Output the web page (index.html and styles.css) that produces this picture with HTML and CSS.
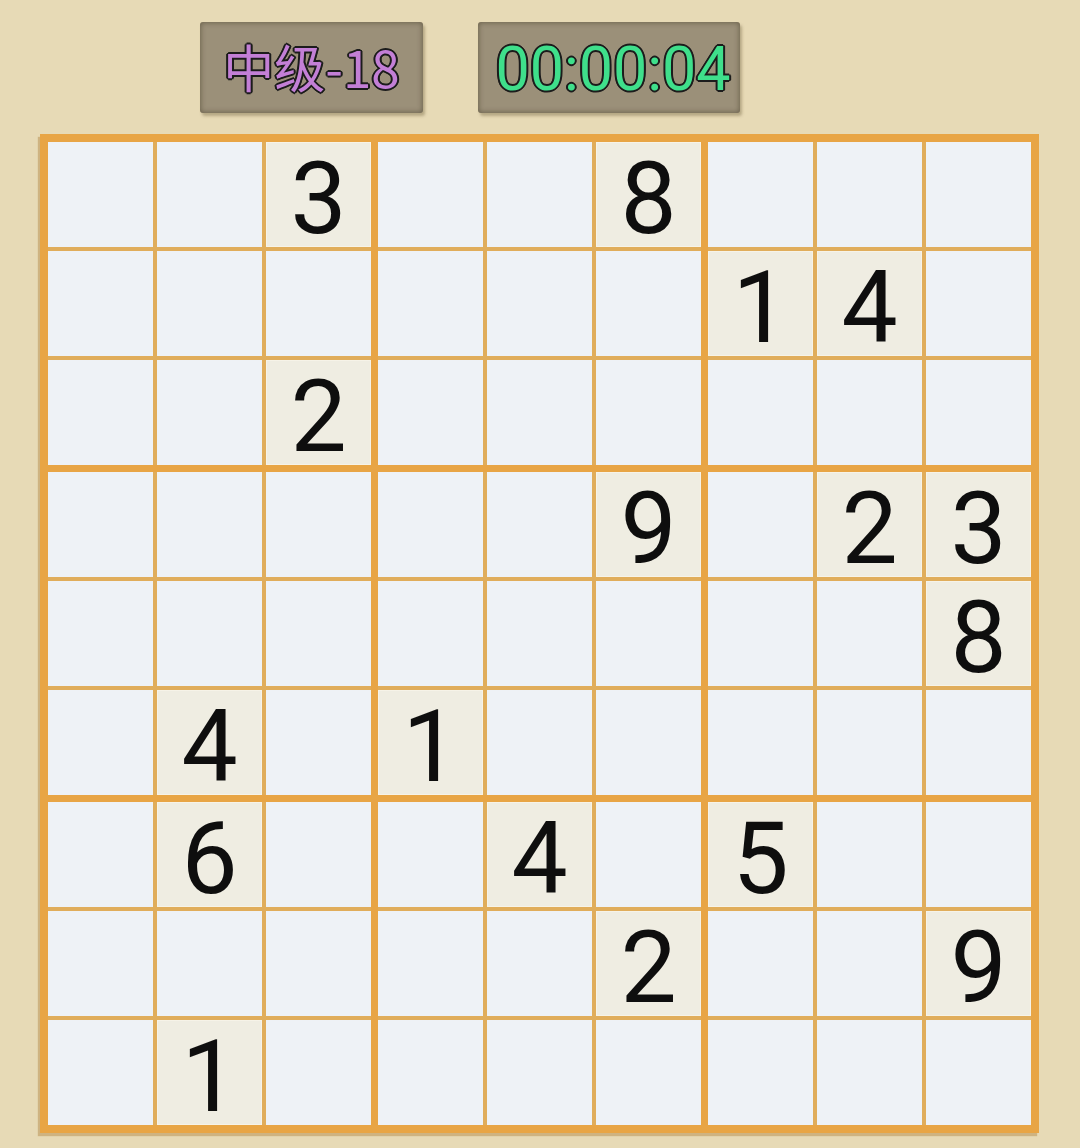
FILE: index.html
```html
<!DOCTYPE html>
<html lang="zh">
<head>
<meta charset="utf-8">
<title>数独</title>
<link rel="stylesheet" href="styles.css">
</head>
<body>
<div class="page">
  <header class="top">
    <div class="panel level">中级-18</div>
    <div class="panel timer">00:00:04</div>
  </header>
  <div class="board">
    <div class="box">
      <div class="cell"></div><div class="cell"></div><div class="cell given">3</div>
      <div class="cell"></div><div class="cell"></div><div class="cell"></div>
      <div class="cell"></div><div class="cell"></div><div class="cell given">2</div>
    </div>
    <div class="box">
      <div class="cell"></div><div class="cell"></div><div class="cell given">8</div>
      <div class="cell"></div><div class="cell"></div><div class="cell"></div>
      <div class="cell"></div><div class="cell"></div><div class="cell"></div>
    </div>
    <div class="box">
      <div class="cell"></div><div class="cell"></div><div class="cell"></div>
      <div class="cell given">1</div><div class="cell given">4</div><div class="cell"></div>
      <div class="cell"></div><div class="cell"></div><div class="cell"></div>
    </div>
    <div class="box">
      <div class="cell"></div><div class="cell"></div><div class="cell"></div>
      <div class="cell"></div><div class="cell"></div><div class="cell"></div>
      <div class="cell"></div><div class="cell given">4</div><div class="cell"></div>
    </div>
    <div class="box">
      <div class="cell"></div><div class="cell"></div><div class="cell given">9</div>
      <div class="cell"></div><div class="cell"></div><div class="cell"></div>
      <div class="cell given">1</div><div class="cell"></div><div class="cell"></div>
    </div>
    <div class="box">
      <div class="cell"></div><div class="cell given">2</div><div class="cell given">3</div>
      <div class="cell"></div><div class="cell"></div><div class="cell given">8</div>
      <div class="cell"></div><div class="cell"></div><div class="cell"></div>
    </div>
    <div class="box">
      <div class="cell"></div><div class="cell given">6</div><div class="cell"></div>
      <div class="cell"></div><div class="cell"></div><div class="cell"></div>
      <div class="cell"></div><div class="cell given">1</div><div class="cell"></div>
    </div>
    <div class="box">
      <div class="cell"></div><div class="cell given">4</div><div class="cell"></div>
      <div class="cell"></div><div class="cell"></div><div class="cell given">2</div>
      <div class="cell"></div><div class="cell"></div><div class="cell"></div>
    </div>
    <div class="box">
      <div class="cell given">5</div><div class="cell"></div><div class="cell"></div>
      <div class="cell"></div><div class="cell"></div><div class="cell given">9</div>
      <div class="cell"></div><div class="cell"></div><div class="cell"></div>
    </div>
  </div>
</div>
</body>
</html>
```

FILE: styles.css
```css
html, body {
  margin: 0;
  padding: 0;
}

body {
  background: #e7dab6;
  font-family: Roboto, "Noto Sans", "Noto Sans CJK SC", sans-serif;
  width: 1080px;
  height: 1148px;
  overflow: hidden;
}

.page {
  padding-top: 22px;
}

.top {
  display: flex;
  gap: 55px;
  padding-left: 200px;
}

.panel {
  height: 91px;
  display: flex;
  align-items: center;
  justify-content: center;
  background: #9b9079;
  border-radius: 3px;
  box-shadow: inset 0 0 5px 1px rgba(60, 50, 30, 0.45), 2px 3px 3px rgba(90, 75, 40, 0.35);
  text-shadow:
    -2px 0 0 #1c1c1c, 2px 0 0 #1c1c1c, 0 -2px 0 #1c1c1c, 0 2px 0 #1c1c1c,
    -1.4px -1.4px 0 #1c1c1c, 1.4px 1.4px 0 #1c1c1c, -1.4px 1.4px 0 #1c1c1c, 1.4px -1.4px 0 #1c1c1c;
}

.level {
  width: 223px;
  color: #c37fd6;
  font-family: "Noto Sans CJK SC", "Noto Sans", sans-serif;
  font-size: 51px;
  padding-bottom: 4px;
  box-sizing: border-box;
}

.timer {
  width: 262px;
  color: #3fdf8b;
  font-family: Roboto, sans-serif;
  font-size: 61px;
  padding-left: 8px;
  padding-top: 2px;
  box-sizing: border-box;
}

.board {
  margin: 21px 0 0 40px;
  width: 999px;
  box-sizing: border-box;
  padding: 8px;
  background: #e8a545;
  display: grid;
  grid-template-columns: repeat(3, 323px);
  grid-template-rows: repeat(3, 323px);
  gap: 7px;
  box-shadow: -2px 3px 1px rgba(170, 120, 50, 0.4);
}

.box {
  display: grid;
  grid-template-columns: repeat(3, 105px);
  grid-template-rows: repeat(3, 105px);
  gap: 4px;
  background: #e0ad5b;
}

.cell {
  height: 105px;
  box-sizing: border-box;
  padding-top: 9px;
  background: #eef2f6;
  text-align: center;
  font-size: 100px;
  line-height: 96px;
  color: #0e0e0e;
}

.given {
  background: #efede2;
  box-shadow: inset 0 0 0 1px #f6f3e8;
}
```
